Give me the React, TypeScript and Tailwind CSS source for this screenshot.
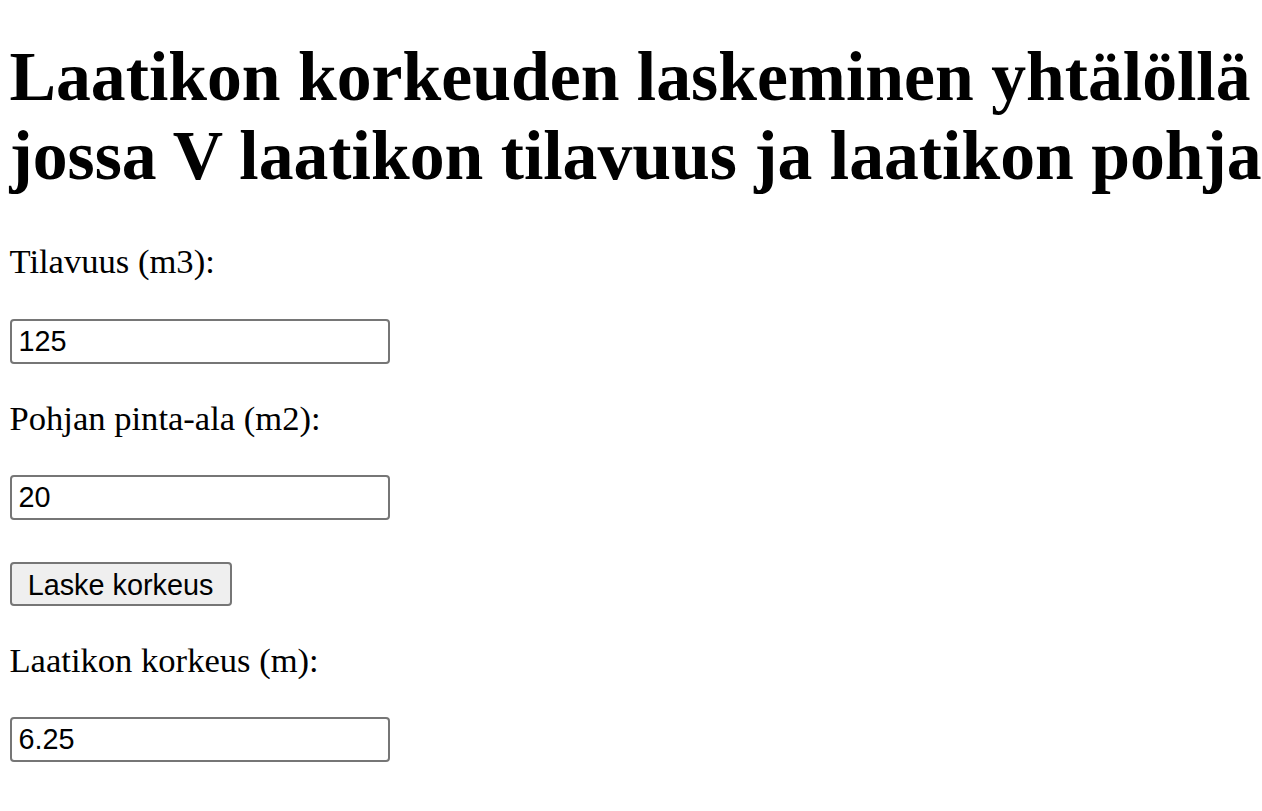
const serif = { fontFamily: '"Liberation Serif", "Times New Roman", serif' }

function Field({ value }: { value: string }) {
  return (
    <input
      type="text"
      defaultValue={value}
      className="block h-[45px] w-[380px] rounded-[4px] border-2 border-[#767676] bg-white px-[7px] font-['Liberation_Sans',Arial,sans-serif] text-[28.8px] text-black outline-none"
    />
  )
}

function Label({ children, className = '' }: { children: string; className?: string }) {
  return <p className={`text-[34.6px] leading-[40px] text-black ${className}`}>{children}</p>
}

export default function App() {
  return (
    <div className="h-screen w-full overflow-hidden bg-white pl-[9.5px] text-black" style={serif}>
      <h1 className="pt-[37px] text-[69.7px] font-bold leading-[79px] whitespace-nowrap">
        <span className="block">Laatikon korkeuden laskeminen yhtälöllä</span>
        <span className="block">jossa V laatikon tilavuus ja laatikon pohja</span>
      </h1>

      <Label className="mt-[46px]">Tilavuus (m3):</Label>
      <div className="mt-[38px]">
        <Field value="125" />
      </div>

      <Label className="mt-[34px]">Pohjan pinta-ala (m2):</Label>
      <div className="mt-[37px]">
        <Field value="20" />
      </div>

      <button
        type="button"
        className="mt-[42px] block h-[44px] w-[222px] rounded-[4px] border-2 border-[#767676] bg-[#efefef] font-['Liberation_Sans',Arial,sans-serif] text-[28.8px] text-black"
      >
        Laske korkeus
      </button>

      <Label className="mt-[34px]">Laatikon korkeus (m):</Label>
      <div className="mt-[37px]">
        <Field value="6.25" />
      </div>
    </div>
  )
}
